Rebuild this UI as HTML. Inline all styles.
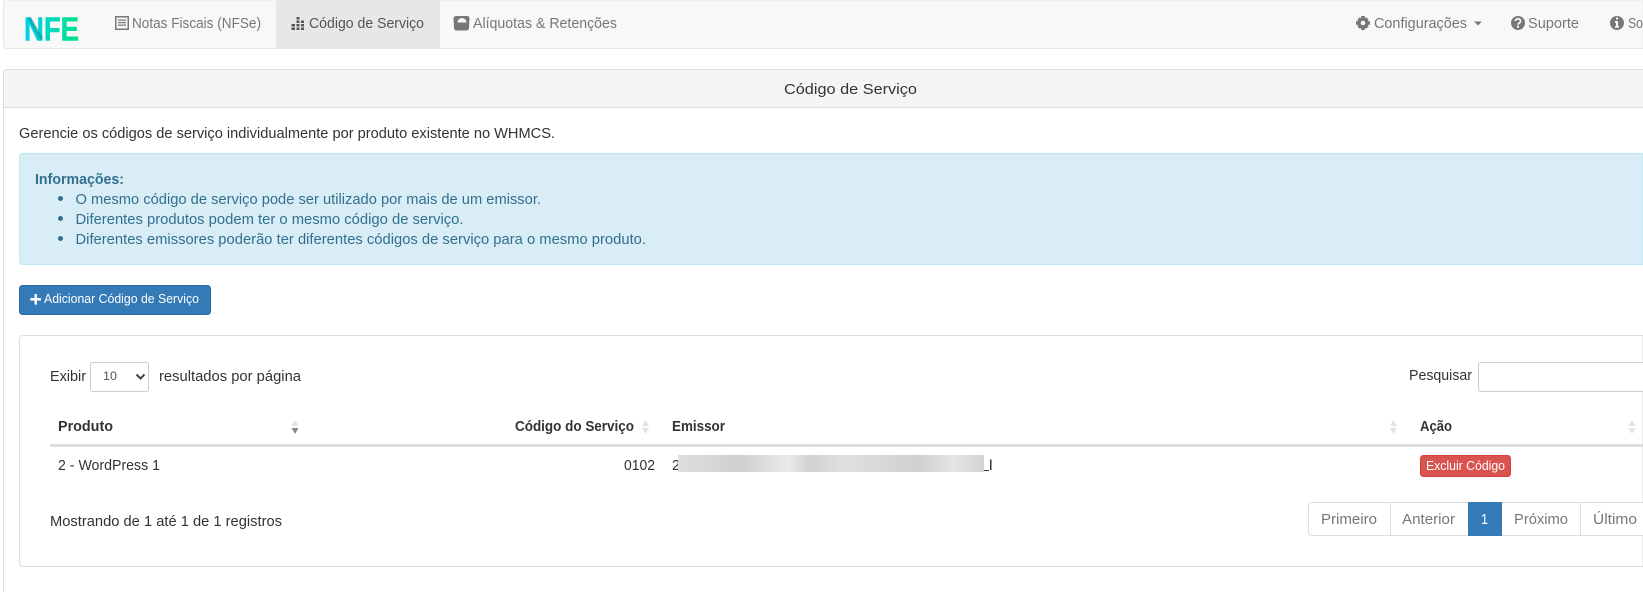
<!DOCTYPE html>
<html lang="pt-BR">
<head>
<meta charset="utf-8">
<title>Código de Serviço</title>
<style>
html,body{margin:0;padding:0;background:#fff;width:1643px;height:592px;overflow:hidden}
svg{display:block}
text{font-family:"Liberation Sans",sans-serif;font-size:14.5px;fill:#333}
.n{fill:#777}
.a{fill:#31708f}
.b{font-weight:700}
.h{font-weight:700;fill:#333}
</style>
</head>
<body>
<svg width="1643" height="592" viewBox="0 0 1643 592" xmlns="http://www.w3.org/2000/svg">
<defs>
<linearGradient id="lg" x1="24" x2="79" y1="0" y2="0" gradientUnits="userSpaceOnUse">
<stop offset="0" stop-color="#00d0ea"/><stop offset=".45" stop-color="#00d8c0"/><stop offset="1" stop-color="#00e288"/>
</linearGradient>
<linearGradient id="blur" x1="0" x2="1" y1="0" y2="0">
<stop offset="0" stop-color="#dedede"/><stop offset=".2" stop-color="#d0d0d0"/><stop offset=".27" stop-color="#dadada"/>
<stop offset=".36" stop-color="#ebebeb"/><stop offset=".43" stop-color="#d2d2d2"/><stop offset=".55" stop-color="#e0e0e0"/>
<stop offset=".78" stop-color="#d0d0d0"/><stop offset=".9" stop-color="#e4e4e4"/><stop offset="1" stop-color="#d4d4d4"/>
</linearGradient>
</defs>

<!-- navbar -->
<path d="M3.500 0V45Q3.500 48.500 7 48.500H1643V0z" fill="#f8f8f8" stroke="#e7e7e7"/>
<rect x="276" y="0" width="164" height="48" fill="#e7e7e7"/>
<text x="24" y="40.500" textLength="55" lengthAdjust="spacingAndGlyphs" class="b" style="font-size:33.500px;fill:url(#lg);stroke:url(#lg);stroke-width:.6;stroke-linejoin:round">NFE</text>
<path d="M30 19L41 38" stroke="#078f9c" stroke-width="3.500" stroke-linecap="round" opacity=".55" fill="none"/>

<g fill="#777">
<path fill-rule="evenodd" d="M115 16h14v14h-14zM116.500 17.500v11h11v-11z"/>
<path d="M118 19.500h8v1.200h-8zM118 22h8v1.200h-8zM118 24.500h8v1.200h-8z"/>
</g>
<text class="n" x="132" y="28" textLength="129" lengthAdjust="spacingAndGlyphs">Notas Fiscais (NFSe)</text>

<g fill="#555">
<path d="M296.500 17h3v2.500h-3zM296.500 20.500h3v2.500h-3zM296.500 24h3v2.500h-3zM296.500 27.500h3v2.500h-3zM291.500 27.500h3.500v2.500h-3.500zM291.500 24h3.500v2.500h-3.500zM301 20.500h3v2.500h-3zM301 24h3v2.500h-3zM301 27.500h3v2.500h-3z"/>
</g>
<text x="309" y="28" textLength="115" lengthAdjust="spacingAndGlyphs" style="fill:#555">Código de Serviço</text>

<path fill="#777" fill-rule="evenodd" d="M457 16h10q2.500 0 2.500 2.500l-.5 9q0 3-3 3h-9q-3 0-3-3l-.5-9q0-2.500 3.500-2.500zM462 18a4.500 4.500 0 0 0-4.500 4.500h9A4.500 4.500 0 0 0 462 18z"/>
<text class="n" x="473" y="28" textLength="144" lengthAdjust="spacingAndGlyphs">Alíquotas &amp; Retenções</text>

<g fill="#777">
<circle cx="1363" cy="23" r="5.500"/>
<path d="M1361.200 16h3.600v14h-3.600zM1356 21.200h14v3.600h-14zM1357.300 19.800l2.500-2.500 8.900 8.900-2.500 2.500zM1368.700 19.800l-2.500-2.500-8.900 8.900 2.500 2.500z"/>
<circle cx="1363" cy="23" r="2.300" fill="#f8f8f8"/>
</g>
<text class="n" x="1374" y="28" textLength="93" lengthAdjust="spacingAndGlyphs">Configurações</text>
<path fill="#777" d="M1474 21.500h8l-4 4z"/>

<circle cx="1518" cy="23" r="7" fill="#777"/>
<path d="M1515.500 21a2.500 2.300 0 1 1 3.800 2c-.8.5-1.300.9-1.300 1.800" fill="none" stroke="#f8f8f8" stroke-width="1.700"/>
<rect x="1517" y="25.800" width="2" height="2" fill="#f8f8f8"/>
<text class="n" x="1528" y="28" textLength="51" lengthAdjust="spacingAndGlyphs">Suporte</text>

<circle cx="1617" cy="23" r="7" fill="#777"/>
<path fill="#f8f8f8" d="M1616 17.500h2v2h-2zM1615 21h3v5h1v1.800h-4V26h1v-3.200h-1z"/>
<text class="n" x="1628" y="28" textLength="15" lengthAdjust="spacingAndGlyphs">So</text>

<!-- panel -->
<path d="M3.500 592V73.500Q3.500 69.500 7.500 69.500H1643" fill="#fff" stroke="#ddd"/>
<path d="M4 107V73.500Q4 70 7.500 70H1643V107z" fill="#f5f5f5"/>
<rect x="4" y="107" width="1639" height="1" fill="#ddd"/>
<text x="784" y="94" textLength="133" lengthAdjust="spacingAndGlyphs">Código de Serviço</text>

<text x="19" y="138" textLength="536" lengthAdjust="spacingAndGlyphs">Gerencie os códigos de serviço individualmente por produto existente no WHMCS.</text>

<!-- alert -->
<path d="M1643 153.500H23.500Q19.500 153.500 19.500 157.500V260.500Q19.500 264.500 23.500 264.500H1643z" fill="#d9edf7" stroke="#bce8f1"/>
<text class="a b" x="35" y="184" textLength="89" lengthAdjust="spacingAndGlyphs">Informações:</text>
<g fill="#31708f"><circle cx="60.500" cy="198.500" r="2.500"/><circle cx="60.500" cy="218.500" r="2.500"/><circle cx="60.500" cy="238.500" r="2.500"/></g>
<text class="a" x="75.500" y="204" textLength="465.500" lengthAdjust="spacingAndGlyphs">O mesmo código de serviço pode ser utilizado por mais de um emissor.</text>
<text class="a" x="75.500" y="224" textLength="388" lengthAdjust="spacingAndGlyphs">Diferentes produtos podem ter o mesmo código de serviço.</text>
<text class="a" x="75.500" y="244" textLength="570.500" lengthAdjust="spacingAndGlyphs">Diferentes emissores poderão ter diferentes códigos de serviço para o mesmo produto.</text>

<!-- button -->
<rect x="19.500" y="285.500" width="191" height="29" rx="3" fill="#337ab7" stroke="#2e6da4"/>
<path fill="#fff" d="M34.500 294h2.400v4h4v2.600h-4v4h-2.400v-4h-4.200V298h4.200z"/>
<text x="44" y="303" textLength="155" lengthAdjust="spacingAndGlyphs" style="font-size:12.500px;fill:#fff">Adicionar Código de Serviço</text>

<!-- table box -->
<path d="M1643 335.500H23.500Q19.500 335.500 19.500 339.500V562.500Q19.500 566.500 23.500 566.500H1643z" fill="#fff" stroke="#ddd"/>

<text x="50" y="381" textLength="36" lengthAdjust="spacingAndGlyphs">Exibir</text>
<rect x="90.500" y="362.500" width="58" height="29" rx="2" fill="#fff" stroke="#ccc"/>
<text x="103" y="380" textLength="14" lengthAdjust="spacingAndGlyphs" style="font-size:12px;fill:#555">10</text>
<path d="M136.500 374.500l4 4 4-4" fill="none" stroke="#444" stroke-width="2"/>
<text x="159" y="381" textLength="142" lengthAdjust="spacingAndGlyphs">resultados por página</text>

<text x="1409" y="380" textLength="63" lengthAdjust="spacingAndGlyphs">Pesquisar</text>
<path d="M1643 362.500H1481.500Q1478.500 362.500 1478.500 365.500V388.500Q1478.500 391.500 1481.500 391.500H1643" fill="#fff" stroke="#ccc"/>

<text class="h" x="58" y="431" textLength="55" lengthAdjust="spacingAndGlyphs">Produto</text>
<text class="h" x="515" y="431" textLength="119" lengthAdjust="spacingAndGlyphs">Código do Serviço</text>
<text class="h" x="672" y="431" textLength="53" lengthAdjust="spacingAndGlyphs">Emissor</text>
<text class="h" x="1420" y="431" textLength="32" lengthAdjust="spacingAndGlyphs">Ação</text>

<g fill="#e3e3e3">
<path d="M295 420l3.500 6h-7zM645.500 420l3.500 6h-7zM645.500 434l3.500-6h-7zM1393.500 420l3.500 6h-7zM1393.500 434l3.500-6h-7zM1632 420l3.500 6h-7zM1632 434l3.500-6h-7z"/>
</g>
<path fill="#888" d="M295 434l3.500-6h-7z"/>

<rect x="50" y="444" width="1593" height="3" fill="#ddd"/>

<text x="58" y="470" textLength="102" lengthAdjust="spacingAndGlyphs">2 - WordPress 1</text>
<text x="624" y="470" textLength="31" lengthAdjust="spacingAndGlyphs">0102</text>
<text x="672" y="470" textLength="8" lengthAdjust="spacingAndGlyphs">2</text>
<rect x="678" y="455" width="306" height="17" fill="url(#blur)"/>
<path fill="#333" d="M984 470h5v1h-5zM990 459.500h1.500V470H990z"/>

<rect x="1420.500" y="455.500" width="90" height="21" rx="3" fill="#d9534f" stroke="#d43f3a"/>
<text x="1426" y="470" textLength="79" lengthAdjust="spacingAndGlyphs" style="font-size:12.500px;fill:#fff">Excluir Código</text>

<text x="50" y="526" textLength="232" lengthAdjust="spacingAndGlyphs">Mostrando de 1 até 1 de 1 registros</text>

<!-- pagination -->
<path d="M1643 502.500H1312.500Q1308.500 502.500 1308.500 506.500V531.500Q1308.500 535.500 1312.500 535.500H1643" fill="#fff" stroke="#ddd"/>
<rect x="1390" y="503" width="1" height="32" fill="#ddd"/>
<rect x="1580" y="503" width="1" height="32" fill="#ddd"/>
<rect x="1468" y="502" width="34" height="34" fill="#337ab7"/>
<text class="n" x="1321" y="524" textLength="56" lengthAdjust="spacingAndGlyphs">Primeiro</text>
<text class="n" x="1402" y="524" textLength="53" lengthAdjust="spacingAndGlyphs">Anterior</text>
<text x="1481" y="524" textLength="7" lengthAdjust="spacingAndGlyphs" style="fill:#fff">1</text>
<text class="n" x="1514" y="524" textLength="54" lengthAdjust="spacingAndGlyphs">Próximo</text>
<text class="n" x="1593" y="524" textLength="44" lengthAdjust="spacingAndGlyphs">Último</text>
</svg>
</body>
</html>
